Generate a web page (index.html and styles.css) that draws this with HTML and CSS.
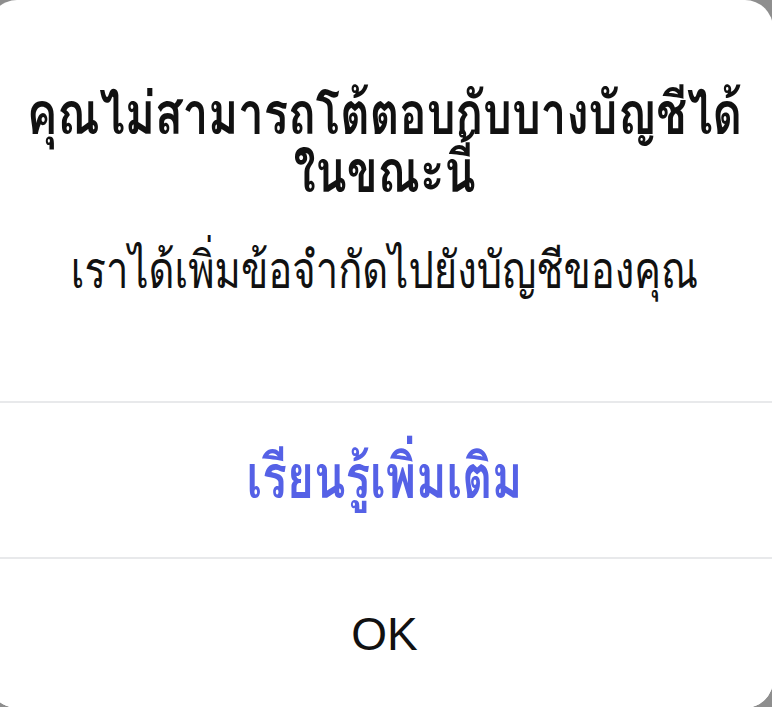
FILE: index.html
```html
<!DOCTYPE html>
<html lang="th">
<head>
    <meta charset="UTF-8">
    <meta name="viewport" content="width=device-width, initial-scale=1.0">
    <title>Limited interactions</title>
    <link rel="stylesheet" href="styles.css">
</head>
<body>
    <div class="dialog">
        <div class="dialog-head">
            <h1 class="dialog-title">คุณไม่สามารถโต้ตอบกับบางบัญชีได้<br>ในขณะนี้</h1>
            <p class="dialog-text">เราได้เพิ่มข้อจำกัดไปยังบัญชีของคุณ</p>
        </div>
        <button type="button" class="dialog-btn btn-link"><span class="btn-label">เรียนรู้เพิ่มเติม</span></button>
        <button type="button" class="dialog-btn btn-ok">OK</button>
    </div>
</body>
</html>
```

FILE: styles.css
```css
html, body {
    margin: 0;
    padding: 0;
    height: 100%;
    overflow: hidden;
    background-color: #8e8e8e;
    font-family: Loma, "Noto Sans Thai", sans-serif;
}

.dialog {
    display: flex;
    flex-direction: column;
    height: 708px;
    margin: 0 -1px 0 -11px;
    background-color: #fff;
    border-radius: 28px;
    overflow: hidden;
}

.dialog-head {
    height: 401px;
    padding: 0 0 0 7px;
    text-align: center;
    color: #111;
}

/* the Thai face on the device is a tall condensed one, stretch ours a bit */
.dialog-title {
    margin: 85px 0 0 0;
    font-size: 45.5px;
    line-height: 44px;
    font-weight: 700;
    transform: scaleY(1.3);
    transform-origin: top center;
}

.dialog-text {
    margin: 74px 0 0 0;
    font-size: 40px;
    line-height: 37px;
    transform: scaleY(1.28);
    transform-origin: top center;
}

.dialog-btn {
    display: block;
    width: 100%;
    border: none;
    border-top: 2px solid #e8e9eb;
    background: #fff;
    font-family: inherit;
    cursor: pointer;
    padding: 0 0 0 7px;
}

.btn-link {
    height: 156px;
    color: #5561e6;
    font-size: 46px;
    font-weight: 700;
}

.btn-label {
    display: inline-block;
    transform: translateY(-4px) scaleY(1.32);
}

.btn-ok {
    flex-grow: 1;
    color: #111;
    font-family: "Liberation Sans", Arial, sans-serif;
    font-size: 46px;
}
```
